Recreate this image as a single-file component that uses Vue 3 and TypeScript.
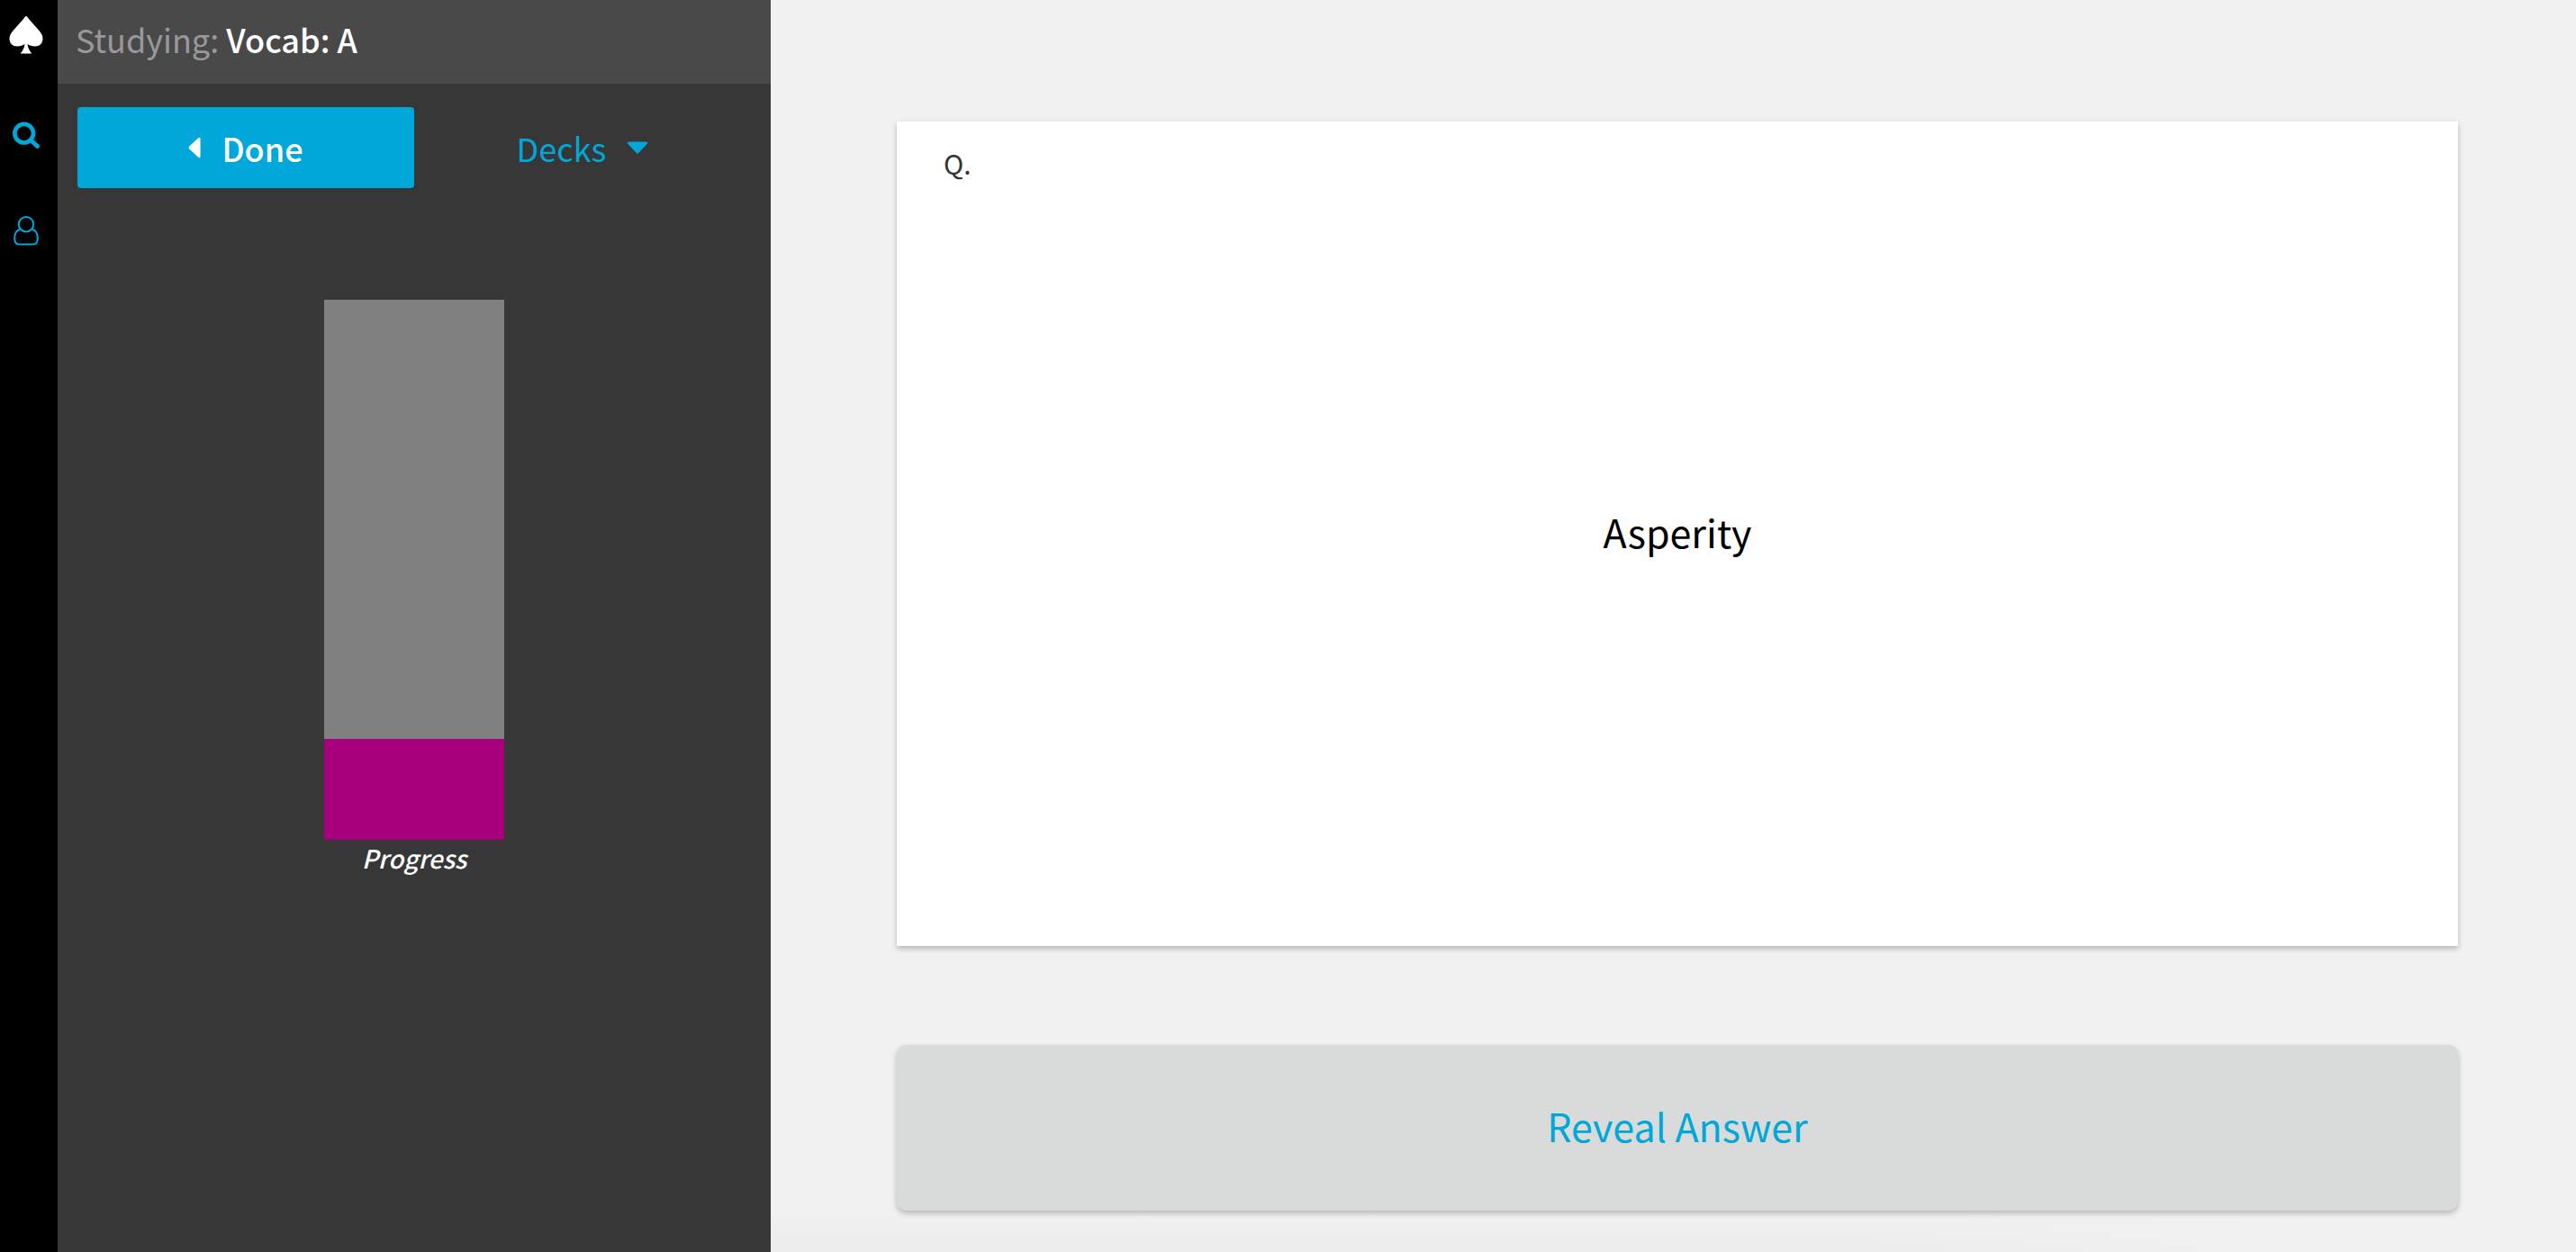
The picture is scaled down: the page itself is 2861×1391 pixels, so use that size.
<script setup lang="ts">
import { computed, ref } from 'vue'

interface Card {
  question: string
  answer: string
}

const deckName = ref('Vocab: A')
const card = ref<Card>({ question: 'Asperity', answer: 'Harshness of tone or manner' })
const revealed = ref(false)
const studied = ref(28)
const total = ref(150)

const progress = computed(() => (studied.value / total.value) * 100)
const sideLabel = computed(() => (revealed.value ? 'A.' : 'Q.'))
const sideText = computed(() => (revealed.value ? card.value.answer : card.value.question))
</script>

<template>
  <div class="app">
    <nav class="rail" aria-label="Main">
      <a href="#" class="rail-link" aria-label="Home">
        <svg width="38" height="42" viewBox="0 0 38 42" fill="#fff" aria-hidden="true">
          <path d="M19 0C20.200 0 20.600 1.300 21.500 2.500L33 15.500C36 19 37.500 21.500 37.500 25C37.500 30 33.800 33.500 29 33.500C25.500 33.500 22.500 32.500 20.500 31C20.800 35.500 23 38.500 25.300 41.500H12.700C15 38.500 17.200 35.500 17.500 31C15.500 32.500 12.500 33.500 9 33.500C4.200 33.500 .5 30 .5 25C.5 21.500 2 19 5 15.500L16.500 2.500C17.400 1.300 17.800 0 19 0Z" />
        </svg>
      </a>
      <a href="#" class="rail-link" aria-label="Search">
        <svg width="30" height="30" viewBox="0 0 30 30" fill="none" stroke="#00a8d9" aria-hidden="true">
          <circle cx="12.700" cy="13.200" r="10.300" stroke-width="4.700" />
          <path d="M20.500 21L27.500 27.500" stroke-width="4.800" stroke-linecap="round" />
        </svg>
      </a>
      <a href="#" class="rail-link" aria-label="Account">
        <svg width="28" height="34" viewBox="0 0 28 34" fill="none" stroke="#00a8d9" stroke-width="2" aria-hidden="true">
          <circle cx="14" cy="9.200" r="8.200" />
          <path d="M7 15C3 15.700 1.200 20.200 1.200 25.200C1.200 29.200 3.500 31.500 7 31.500H21C24.500 31.500 26.800 29.200 26.800 25.200C26.800 20.200 25 15.700 21 15" />
        </svg>
      </a>
    </nav>

    <aside class="panel">
      <header class="panel-head">
        <h1 class="title"><span class="muted">Studying:</span> {{ deckName }}</h1>
      </header>
      <div class="actions">
        <button type="button" class="action primary">
          <svg width="14" height="24" viewBox="0 0 14 24" fill="currentColor" aria-hidden="true">
            <path d="M11.500 1Q13.500 0 13.500 2.200V21.800Q13.500 24 11.500 23L1 13.200Q0 12 1 10.800Z" />
          </svg>
          Done
        </button>
        <button type="button" class="action">
          Decks
          <svg width="24" height="14" viewBox="0 0 24 14" fill="currentColor" aria-hidden="true">
            <path d="M1 2.500Q0 .5 2.200 .5H21.800Q24 .5 23 2.500L13.200 13Q12 14 10.800 13Z" />
          </svg>
        </button>
      </div>
      <figure class="progress">
        <div class="bar" role="progressbar" aria-label="Progress" :aria-valuenow="studied" aria-valuemin="0" :aria-valuemax="total">
          <div class="fill" :style="{ height: progress + '%' }"></div>
        </div>
        <figcaption class="caption">Progress</figcaption>
      </figure>
    </aside>

    <main class="study">
      <section class="card">
        <span class="side">{{ sideLabel }}</span>
        <p class="word">{{ sideText }}</p>
      </section>
      <button type="button" class="reveal" @click="revealed = !revealed">Reveal Answer</button>
    </main>
  </div>
</template>

<style>
body {
  margin: 0;
}
</style>

<style scoped>
.app {
  display: flex;
  min-height: 100vh;
  font-family: "Noto Sans CJK SC", "Noto Sans", sans-serif;
  font-size: 36px;
  line-height: 48px;
  color: #000;
}

.app * {
  box-sizing: border-box;
}

.rail {
  display: flex;
  flex: 0 0 64px;
  flex-direction: column;
  align-items: center;
  gap: 75px;
  padding: 18px 6px 18px 0;
  background: #000;
}

.rail-link,
.rail-link svg {
  display: block;
}

.panel {
  flex: 0 0 792px;
  background: #373737;
}

.panel-head {
  padding: 19px 20px 26px;
  background: #494949;
}

.title {
  margin: 0;
  font-size: 36px;
  font-weight: 500;
  color: #fff;
}

.muted {
  font-weight: 400;
  color: #999;
}

.actions {
  display: grid;
  grid-template-columns: 1fr 1fr;
  padding: 26px 22px;
}

.action {
  display: flex;
  align-items: center;
  justify-content: center;
  gap: 23px;
  height: 90px;
  padding: 0;
  border: 0;
  border-radius: 4px;
  background: none;
  color: #00a8d9;
  font: inherit;
  cursor: pointer;
}

.primary {
  background: #00a8d9;
  color: #fff;
  font-weight: 500;
}

.progress {
  display: flex;
  flex-direction: column;
  align-items: center;
  margin: 98px 0 0;
}

.bar {
  display: flex;
  flex-direction: column;
  justify-content: flex-end;
  width: 200px;
  height: 600px;
  background: #808080;
}

.fill {
  background: #a8007d;
}

.caption {
  font-size: 28px;
  font-weight: 500;
  line-height: 40px;
  font-style: italic;
  color: #fff;
}

.study {
  display: flex;
  flex: 1;
  flex-direction: column;
  gap: 110px;
  min-width: 0;
  padding: 135px 131px 46px 140px;
  background:
    linear-gradient(to right, transparent 60%, #f1f1f1 85%) bottom / 100% 48px no-repeat,
    linear-gradient(#f1f1f1, #ececec) bottom / 100% 48px no-repeat,
    #f1f1f1;
}

.card {
  display: grid;
  grid-template-rows: 48px 1fr 52px;
  flex: 1;
  padding: 22px 52px 24px;
  background: #fff;
  box-shadow: 0 3px 6px rgba(0, 0, 0, 0.25);
}

.side {
  font-size: 30px;
  color: #333;
}

.word {
  align-self: center;
  margin: 0;
  font-size: 43px;
  line-height: 60px;
  text-align: center;
}

.reveal {
  height: 184px;
  padding: 0 0 6px;
  border: 0;
  border-radius: 10px;
  background: #d9dbda;
  box-shadow: 0 3px 6px rgba(0, 0, 0, 0.25);
  color: #00a8d9;
  font-family: inherit;
  font-size: 43px;
  line-height: 60px;
  cursor: pointer;
}
</style>
